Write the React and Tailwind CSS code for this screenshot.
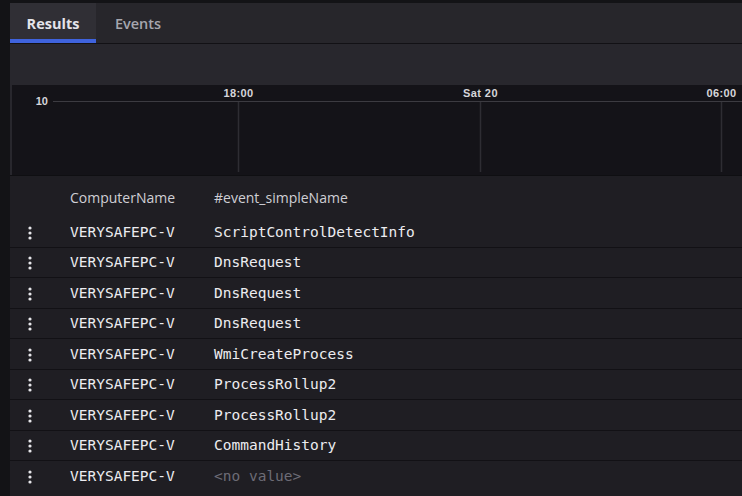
import React from "react";

const rows = [
  ["VERYSAFEPC-V", "ScriptControlDetectInfo"],
  ["VERYSAFEPC-V", "DnsRequest"],
  ["VERYSAFEPC-V", "DnsRequest"],
  ["VERYSAFEPC-V", "DnsRequest"],
  ["VERYSAFEPC-V", "WmiCreateProcess"],
  ["VERYSAFEPC-V", "ProcessRollup2"],
  ["VERYSAFEPC-V", "ProcessRollup2"],
  ["VERYSAFEPC-V", "CommandHistory"],
  ["VERYSAFEPC-V", null],
];

function Kebab() {
  return (
    <svg width="6" height="16" viewBox="0 0 6 16" className="block">
      <circle cx="3" cy="3" r="1.6" fill="#e6e6ea" />
      <circle cx="3" cy="8" r="1.6" fill="#e6e6ea" />
      <circle cx="3" cy="13" r="1.6" fill="#e6e6ea" />
    </svg>
  );
}

function Chart() {
  return (
    <svg width="730" height="90" viewBox="0 0 730 90" className="block">
      <rect x="0" y="0" width="730" height="90" fill="#141318" />
      <line x1="41" y1="16.5" x2="730" y2="16.5" stroke="#3c3b41" strokeWidth="1" />
      <text x="36" y="20" textAnchor="end" fill="#d6d6da" fontSize="11" fontWeight="700" fontFamily="'Liberation Sans', Arial, sans-serif">10</text>
      {[
        [226.5, "18:00"],
        [468.5, "Sat 20"],
        [709.5, "06:00"],
      ].map(([x, t]) => (
        <g key={t}>
          <line x1={x} y1="17" x2={x} y2="87" stroke="#2e2d33" strokeWidth="1.5" />
          <text x={x} y="12" textAnchor="middle" fill="#d6d6da" fontSize="11" fontWeight="700" letterSpacing="0.4" fontFamily="'Liberation Sans', Arial, sans-serif">{t}</text>
        </g>
      ))}
    </svg>
  );
}

export default function App() {
  return (
    <div className="w-[742px] h-[496px] overflow-hidden bg-[#131316] pl-[10px] pt-[3px]">
      <div className="h-full bg-[#1f1e23] flex flex-col">
        {/* Tabs */}
        <div className="h-[41px] shrink-0 flex bg-[#27262b] border-b border-[#121115] font-['Open_Sans',sans-serif] text-[14.5px]">
          <div className="w-[86px] h-[40px] flex items-center justify-center bg-[#302f35] border-b-4 border-[#3f63dd] pt-[5px] font-bold text-[#e4e4ea]">
            Results
          </div>
          <div className="w-[84px] h-[40px] flex items-center justify-center pt-[1px] font-semibold text-[#a6a6ae]">
            Events
          </div>
        </div>
        {/* toolbar */}
        <div className="h-[41px] shrink-0 bg-[#28272d]" />
        {/* chart */}
        <div className="h-[91px] shrink-0 bg-[#28272d] pl-[2px] border-b border-[#0f0f12]">
          <Chart />
        </div>
        {/* table */}
        <div className="flex-1 bg-[#1f1e23]">
          <div className="h-[41px] flex items-center font-['Open_Sans',sans-serif] text-[14px] text-[#cfcfd5] pt-[1px]">
            <div className="w-[60px]" />
            <div className="w-[144px]">ComputerName</div>
            <div>#event_simpleName</div>
          </div>
          {rows.map(([a, b], i) => (
            <div
              key={i}
              className={`h-[30.5px] flex items-center font-['DejaVu_Sans_Mono',monospace] text-[14.5px] pt-[2px] ${i < rows.length - 1 ? "border-b border-[#121115]" : ""}`}
            >
              <div className="w-[60px] pl-[17px] flex items-center">
                <Kebab />
              </div>
              <div className="w-[144px] text-[#ececf0]">{a}</div>
              {b ? (
                <div className="text-[#ececf0]">{b}</div>
              ) : (
                <div className="text-[#6d6c76]">&lt;no value&gt;</div>
              )}
            </div>
          ))}
        </div>
      </div>
    </div>
  );
}
